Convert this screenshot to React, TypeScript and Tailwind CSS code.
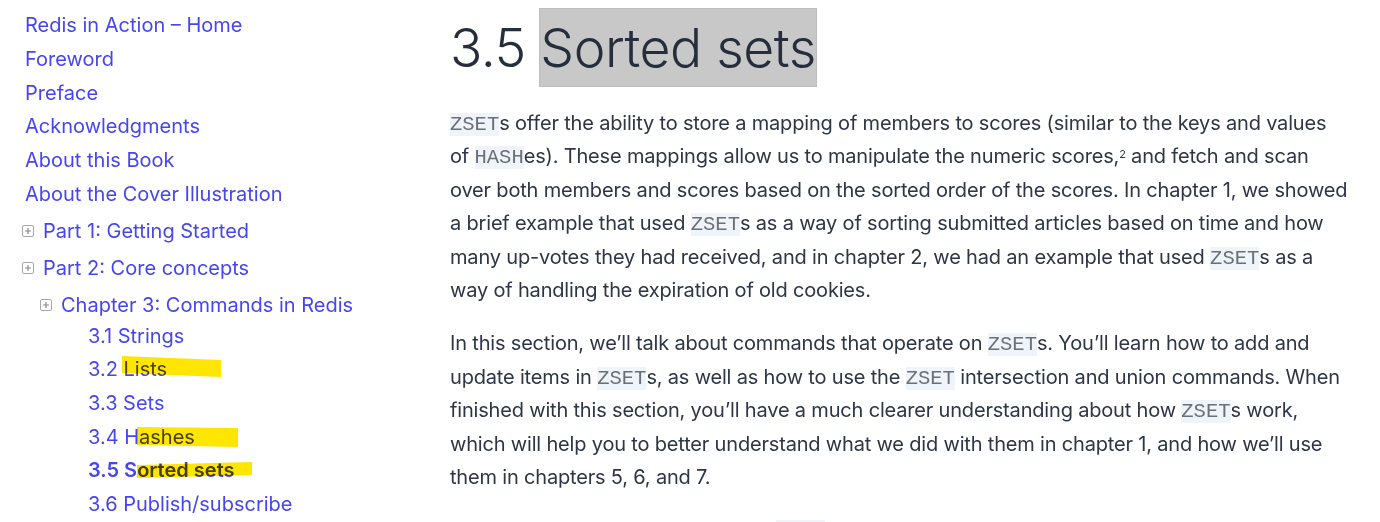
import React from 'react';

const Code = ({ children }: { children: React.ReactNode }) => (
  <code className="bg-[#eff4fb] text-[#6b6f76] text-[20.5px] leading-none tracking-normal font-['Liberation_Mono',monospace]">{children}</code>
);

const PlusBox = () => (
  <span className="inline-flex items-center justify-center w-[12px] h-[12px] border border-[#a8a8a8] rounded-[2px] mr-[9px] shrink-0">
    <svg width="8" height="8" viewBox="0 0 8 8">
      <path d="M4 1v6M1 4h6" stroke="#8a8a8a" strokeWidth="1.2" />
    </svg>
  </span>
);

const Marker = ({ w, points }: { w: number; points: string }) => (
  <svg className="absolute top-0 left-0 mix-blend-multiply pointer-events-none" width={w} height="26" viewBox={`0 0 ${w} 26`}>
    <polygon points={points} fill="#ffe600" />
  </svg>
);

const topLinks = ['Redis in Action – Home', 'Foreword', 'Preface', 'Acknowledgments', 'About this Book', 'About the Cover Illustration'];

const App: React.FC = () => {
  return (
    <div className="w-[1380px] h-[522px] overflow-hidden bg-white flex font-['Inter',sans-serif]">
      {/* Sidebar */}
      <nav className="w-[450px] shrink-0 pl-[25px] pt-[9px] text-[20px] text-[#4646f0]">
        <ul className="leading-[33.8px]">
          {topLinks.map(l => (
            <li key={l}>{l}</li>
          ))}
        </ul>
        <ul className="mt-[1px] leading-[37px]">
          <li className="flex items-center -ml-[3px]"><PlusBox />Part 1: Getting Started</li>
          <li className="flex items-center -ml-[3px]"><PlusBox />Part 2: Core concepts</li>
          <li className="flex items-center ml-[15px]"><PlusBox />Chapter 3: Commands in Redis</li>
        </ul>
        <ul className="pl-[63px] leading-[33.6px] -mt-[4px]">
          <li>3.1 Strings</li>
          <li className="flex">
            <span>3.2&nbsp;</span>
            <span className="relative">Lists
              <span className="absolute left-[-2px] top-[2px]"><Marker w={100} points="0,1 99,5 99,22 0,18" /></span>
            </span>
          </li>
          <li>3.3 Sets</li>
          <li className="flex">
            <span>3.4 H</span>
            <span className="relative">ashes
              <span className="absolute left-[-2px] top-[5px]"><Marker w={102} points="0,1 101,2 101,21 0,19" /></span>
            </span>
          </li>
          <li className="flex font-semibold">
            <span>3.5 S</span>
            <span className="relative">orted sets
              <span className="absolute left-[0px] top-[8px]"><Marker w={116} points="0,3 115,0 115,13 0,16" /></span>
            </span>
          </li>
          <li>3.6 Publish/subscribe</li>
        </ul>
      </nav>

      {/* Main content */}
      <main className="w-[900px] pt-[9px] text-[#2d3546]">
        <h1 className="text-[53.5px] font-light leading-[77px] text-[#262d3b] tracking-[-0.5px]">
          3.5 <span className="bg-[#c8c8c8] py-[6px] outline outline-[#bdbdbd]">Sorted sets</span>
        </h1>
        <div className="mt-[21px] text-[20px] leading-[33.4px] tracking-[-0.18px] space-y-[20px]">
          <p>
            <Code>ZSET</Code>s offer the ability to store a mapping of members to scores (similar to the keys and values of{' '}
            <Code>HASH</Code>es). These mappings allow us to manipulate the numeric scores,<sup className="text-[11px]">2</sup> and fetch and scan over both members and scores based on the sorted order of the scores. In chapter 1, we showed a brief example that used{' '}
            <Code>ZSET</Code>s as a way of sorting submitted articles based on time and how many up-votes they had received, and in chapter 2, we had an example that used{' '}
            <Code>ZSET</Code>s as a way of handling the expiration of old cookies.
          </p>
          <p>
            In this section, we’ll talk about commands that operate on <Code>ZSET</Code>s. You’ll learn how to add and update items in{' '}
            <Code>ZSET</Code>s, as well as how to use the <Code>ZSET</Code> intersection and union commands. When finished with this section, you’ll have a much clearer understanding about how{' '}
            <Code>ZSET</Code>s work, which will help you to better understand what we did with them in chapter 1, and how we’ll use them in chapters 5, 6, and 7.
          </p>
          <p>
            Let’s look at some commonly used <Code>ZSET</Code> commands in table 3.9.
          </p>
        </div>
      </main>
    </div>
  );
};

export default App;
